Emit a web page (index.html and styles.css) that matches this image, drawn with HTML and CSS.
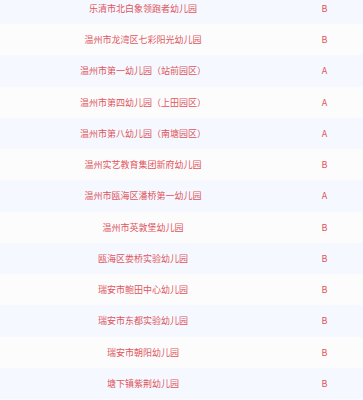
FILE: index.html
```html
<!DOCTYPE html>
<html lang="zh-CN">
<head>
<meta charset="utf-8">
<link rel="stylesheet" href="styles.css">
</head>
<body>
<div class="list">
  <div class="row"><span class="name">乐清市北白象领跑者幼儿园</span><span class="grade">B</span></div>
  <div class="row"><span class="name">温州市龙湾区七彩阳光幼儿园</span><span class="grade">B</span></div>
  <div class="row"><span class="name">温州市第一幼儿园（站前园区）</span><span class="grade">A</span></div>
  <div class="row"><span class="name">温州市第四幼儿园（上田园区）</span><span class="grade">A</span></div>
  <div class="row"><span class="name">温州市第八幼儿园（南塘园区）</span><span class="grade">A</span></div>
  <div class="row"><span class="name">温州实艺教育集团新府幼儿园</span><span class="grade">B</span></div>
  <div class="row"><span class="name">温州市瓯海区潘桥第一幼儿园</span><span class="grade">A</span></div>
  <div class="row"><span class="name">温州市英敦堡幼儿园</span><span class="grade">B</span></div>
  <div class="row"><span class="name">瓯海区娄桥实验幼儿园</span><span class="grade">B</span></div>
  <div class="row"><span class="name">瑞安市鲍田中心幼儿园</span><span class="grade">B</span></div>
  <div class="row"><span class="name">瑞安市东都实验幼儿园</span><span class="grade">B</span></div>
  <div class="row"><span class="name">瑞安市朝阳幼儿园</span><span class="grade">B</span></div>
  <div class="row"><span class="name">塘下镇紫荆幼儿园</span><span class="grade">B</span></div>
</div>
</body>
</html>
```
FILE: styles.css
```css
html, body {
  margin: 0;
  padding: 0;
  background: #fcfcfc;
  overflow: hidden;
}
.list {
  margin-top: -7.25px;
  display: flex;
  flex-direction: column;
}
.row {
  height: 31.25px;
  display: flex;
  align-items: center;
  font-family: "Noto Sans CJK SC", "Noto Sans", sans-serif;
  font-size: 9px;
  color: #e0545c;
}
.row:nth-child(odd) {
  background: #f5f9ff;
}
.row:nth-child(even) {
  background: #fcfcfc;
}
.name {
  width: 286px;
  text-align: center;
}
.grade {
  flex: 1;
  text-align: center;
}
```
